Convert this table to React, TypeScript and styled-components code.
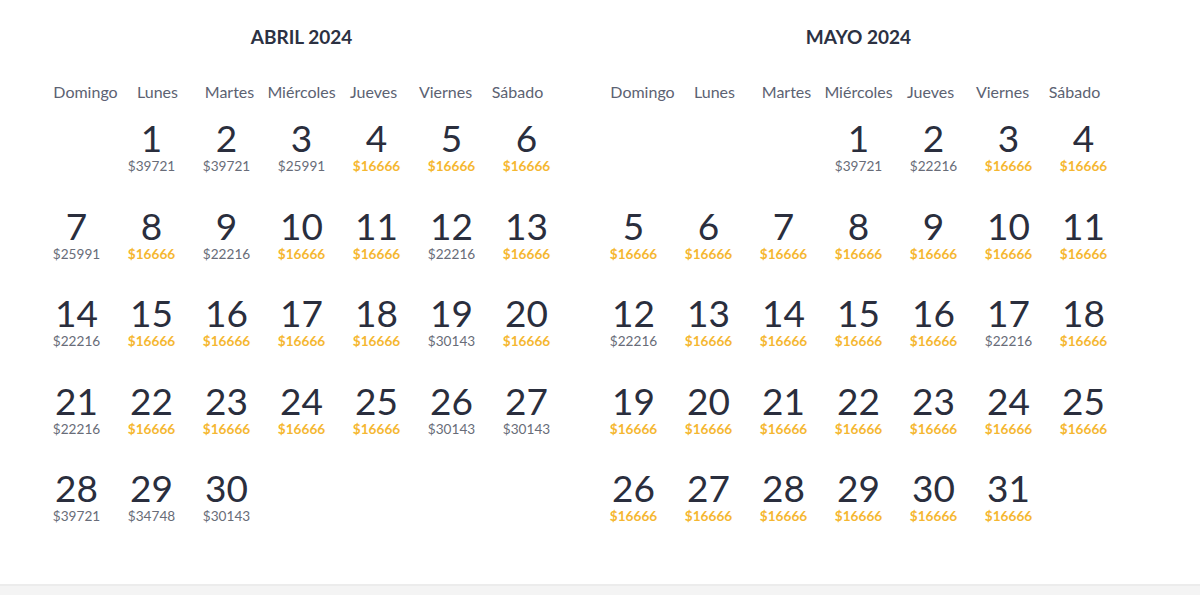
import React from "react";
import styled, { createGlobalStyle } from "styled-components";

const GlobalStyle = createGlobalStyle`
  html, body {
    margin: 0;
    padding: 0;
    background: #ffffff;
    font-family: Lato, "Open Sans", "Noto Sans", sans-serif;
  }
`;

const Page = styled.div`
  width: 1200px;
  height: 595px;
  display: flex;
  flex-direction: column;
  overflow: hidden;
`;

const Months = styled.div`
  height: 584px;
  display: flex;
  padding-left: 23px;
  box-sizing: border-box;
`;

const Footer = styled.div`
  flex: 1;
  background: #f4f4f4;
  border-top: 2px solid #ececec;
`;

const Month = styled.section`
  width: 557px;
  display: flex;
  flex-direction: column;
  align-items: center;
  padding-top: 26px;
`;

const Title = styled.h2`
  margin: 0;
  font-size: 19px;
  line-height: 22px;
  font-weight: 700;
  color: #2c3142;
`;

const WeekHeader = styled.div`
  margin-top: 34px;
  display: grid;
  grid-template-columns: repeat(7, 72px);
`;

const DayName = styled.div`
  text-align: center;
  font-size: 16px;
  line-height: 20px;
  color: #5c6272;
  white-space: nowrap;
`;

const Grid = styled.div`
  margin-top: 18px;
  display: grid;
  grid-template-columns: repeat(7, 75px);
  grid-auto-rows: 54px;
  row-gap: 33.5px;
`;

const Cell = styled.div`
  display: flex;
  flex-direction: column;
  align-items: center;
`;

const DayNumber = styled.div`
  font-size: 37px;
  line-height: 36px;
  color: #2a2e3d;
`;

const Price = styled.div<{ $low: boolean }>`
  margin-top: 2px;
  font-size: 13.6px;
  line-height: 16px;
  font-weight: ${(p) => (p.$low ? 700 : 400)};
  color: ${(p) => (p.$low ? "#f5b731" : "#686c78")};
`;

const dayNames = [
  "Domingo",
  "Lunes",
  "Martes",
  "Miércoles",
  "Jueves",
  "Viernes",
  "Sábado",
];

const LOW = 16666;

interface MonthData {
  title: string;
  offset: number;
  prices: number[];
}

const months: MonthData[] = [
  {
    title: "ABRIL 2024",
    offset: 1,
    prices: [
      39721, 39721, 25991, 16666, 16666, 16666,
      25991, 16666, 22216, 16666, 16666, 22216, 16666,
      22216, 16666, 16666, 16666, 16666, 30143, 16666,
      22216, 16666, 16666, 16666, 16666, 30143, 30143,
      39721, 34748, 30143,
    ],
  },
  {
    title: "MAYO 2024",
    offset: 3,
    prices: [
      39721, 22216, 16666, 16666,
      16666, 16666, 16666, 16666, 16666, 16666, 16666,
      22216, 16666, 16666, 16666, 16666, 22216, 16666,
      16666, 16666, 16666, 16666, 16666, 16666, 16666,
      16666, 16666, 16666, 16666, 16666, 16666,
    ],
  },
];

const MonthCalendar: React.FC<{ month: MonthData }> = ({ month }) => (
  <Month>
    <Title>{month.title}</Title>
    <WeekHeader>
      {dayNames.map((d) => (
        <DayName key={d}>{d}</DayName>
      ))}
    </WeekHeader>
    <Grid>
      {Array.from({ length: month.offset }).map((_, i) => (
        <Cell key={`e${i}`} />
      ))}
      {month.prices.map((price, i) => (
        <Cell key={i}>
          <DayNumber>{i + 1}</DayNumber>
          <Price $low={price === LOW}>${price}</Price>
        </Cell>
      ))}
    </Grid>
  </Month>
);

export default function App() {
  return (
    <Page>
      <GlobalStyle />
      <Months>
        {months.map((m) => (
          <MonthCalendar key={m.title} month={m} />
        ))}
      </Months>
      <Footer />
    </Page>
  );
}
